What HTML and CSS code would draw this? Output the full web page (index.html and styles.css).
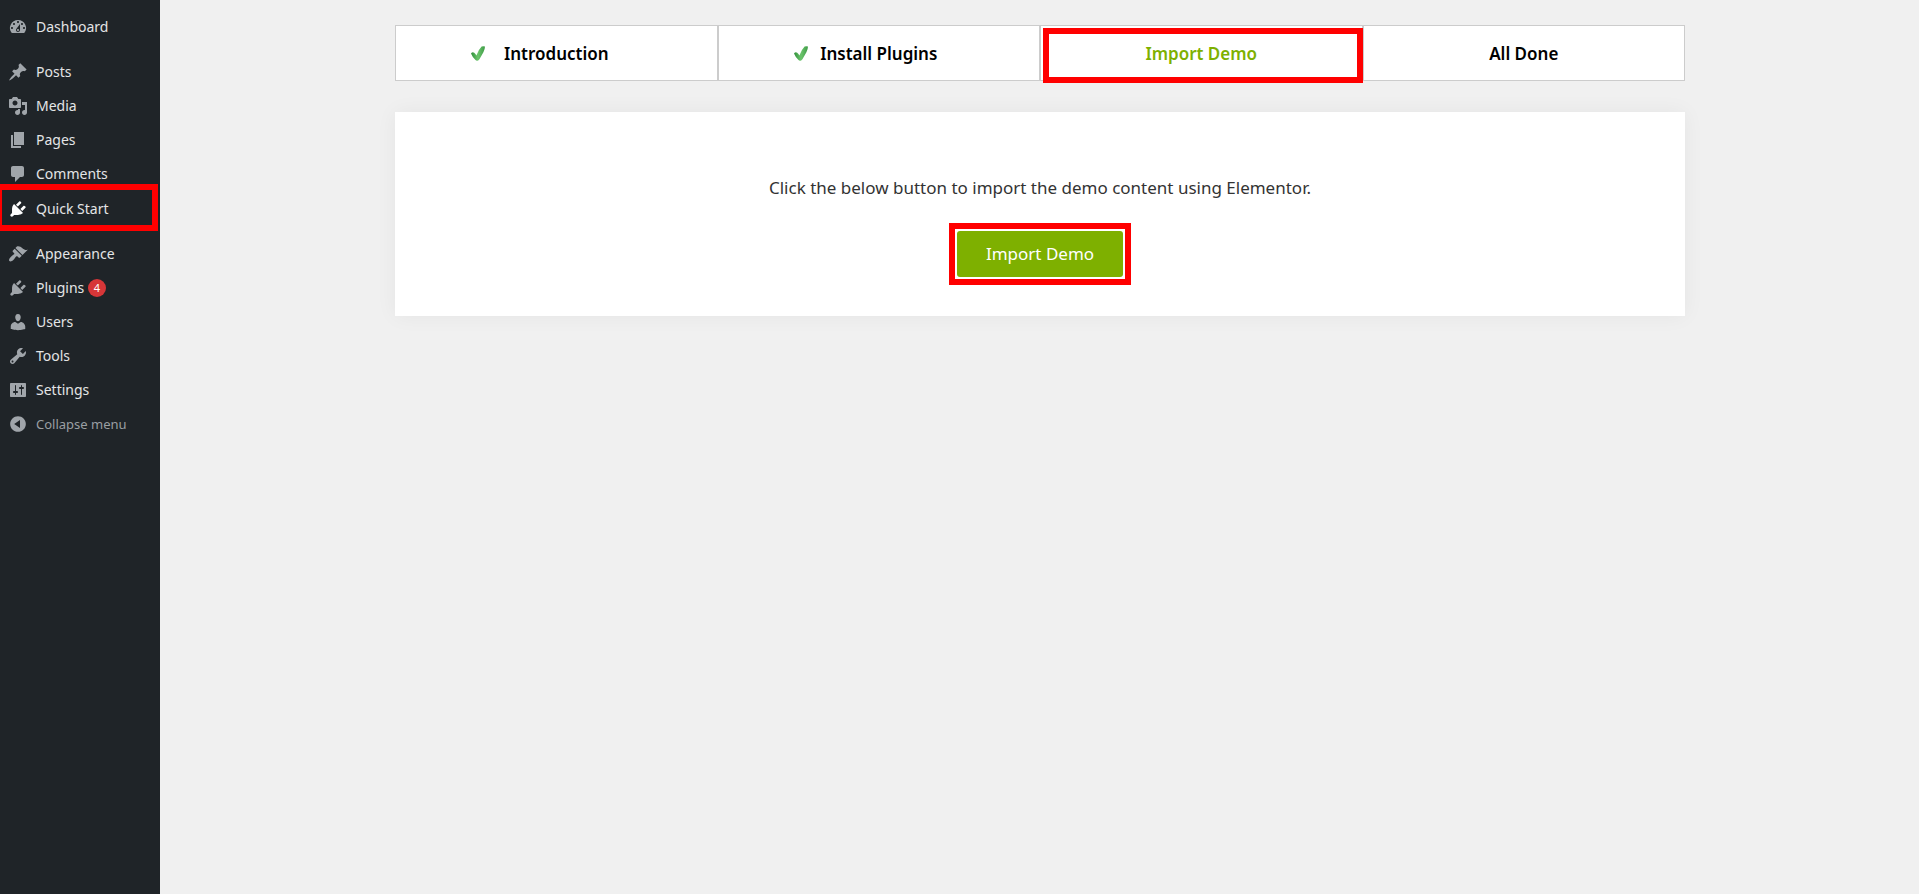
FILE: index.html
```html
<!DOCTYPE html>
<html lang="en">
<head>
<meta charset="utf-8">
<meta name="viewport" content="width=device-width, initial-scale=1">
<title>Quick Start</title>
<link rel="stylesheet" href="styles.css">
</head>
<body>
<div class="layout">
  <nav class="sidebar" aria-label="Main menu">
    <ul class="menu">
      <li class="menu-item"><a class="menu-link" href="#"><svg class="icon" viewBox="0 0 20 20" aria-hidden="true"><path d="M3.76 16h12.48A7.998 7.998 0 0 0 10 3a7.998 7.998 0 0 0-6.24 13zM10 4c.55 0 1 .45 1 1s-.45 1-1 1-1-.45-1-1 .45-1 1-1zM6 6c.55 0 1 .45 1 1s-.45 1-1 1-1-.45-1-1 .45-1 1-1zm8 0c.55 0 1 .45 1 1s-.45 1-1 1-1-.45-1-1 .45-1 1-1zm-5.37 5.55L12 7v6c0 1.1-.9 2-2 2s-2-.9-2-2c0-.57.24-1.08.63-1.45zM4 10c.55 0 1 .45 1 1s-.45 1-1 1-1-.45-1-1 .45-1 1-1zm12 0c.55 0 1 .45 1 1s-.45 1-1 1-1-.45-1-1 .45-1 1-1zm-5 3c0-.55-.45-1-1-1s-1 .45-1 1 .45 1 1 1 1-.45 1-1z"/></svg>Dashboard</a></li>
      <li class="separator" role="separator"></li>
      <li class="menu-item"><a class="menu-link" href="#"><svg class="icon" viewBox="0 0 20 20" aria-hidden="true"><path d="M10.44 3.02l1.82-1.82 6.36 6.35-1.83 1.82c-1.05-.68-2.48-.57-3.41.36l-.75.75c-.92.93-1.04 2.35-.35 3.41l-1.83 1.82-2.41-2.41-2.8 2.79c-.42.42-3.38 2.71-3.8 2.29s1.86-3.39 2.28-3.81l2.79-2.79L4.1 9.36l1.83-1.82c1.05.69 2.48.57 3.4-.36l.75-.75c.93-.92 1.05-2.35.36-3.41z"/></svg>Posts</a></li>
      <li class="menu-item"><a class="menu-link" href="#"><svg class="icon" viewBox="0 0 20 20" aria-hidden="true"><path d="M13 11V4c0-.55-.45-1-1-1h-1.67L9 1H5L3.67 3H2c-.55 0-1 .45-1 1v7c0 .55.45 1 1 1h10c.55 0 1-.45 1-1zM7 4.5c1.38 0 2.5 1.12 2.5 2.5S8.38 9.5 7 9.5 4.5 8.38 4.5 7 5.62 4.5 7 4.5zM14 6h5v10.5c0 1.38-1.12 2.5-2.5 2.5S14 17.88 14 16.5s1.12-2.5 2.5-2.5c.17 0 .34.02.5.05V9h-3V6zm-4 8.05V13h2v3.5c0 1.38-1.12 2.5-2.5 2.5S7 17.88 7 16.5 8.12 14 9.5 14c.17 0 .34.02.5.05z"/></svg>Media</a></li>
      <li class="menu-item"><a class="menu-link" href="#"><svg class="icon" viewBox="0 0 20 20" aria-hidden="true"><path d="M6 15V2h10v13H6zm-1 1h8v2H3V5h2v11z"/></svg>Pages</a></li>
      <li class="menu-item"><a class="menu-link" href="#"><svg class="icon" viewBox="0 0 20 20" aria-hidden="true"><path d="M5 2h9c1.1 0 2 .9 2 2v7c0 1.1-.9 2-2 2h-2l-5 5v-5H5c-1.1 0-2-.9-2-2V4c0-1.1.9-2 2-2z"/></svg>Comments</a></li>
      <li class="menu-item menu-item-current highlight"><a class="menu-link" href="#" aria-current="page"><svg class="icon" viewBox="0 0 20 20" aria-hidden="true"><path d="M13.11 4.36L9.87 7.6 8 5.73l3.24-3.24c.35-.34 1.05-.2 1.56.32.52.51.66 1.21.31 1.55zm-8 1.77l.91-1.12 9.01 9.01-1.19.84c-.71.71-2.63 1.16-3.82 1.16H6.14L4.9 17.26c-.59.59-1.54.59-2.12 0-.59-.58-.59-1.53 0-2.12l1.24-1.24v-3.88c0-1.13.4-3.19 1.09-3.89zm7.26 3.97l3.24-3.24c.34-.35 1.04-.21 1.55.31.52.51.66 1.21.31 1.55l-3.24 3.25z"/></svg>Quick Start</a></li>
      <li class="separator" role="separator"></li>
      <li class="menu-item"><a class="menu-link" href="#"><svg class="icon" viewBox="0 0 20 20" aria-hidden="true"><path d="M14.48 11.06L7.41 3.99l1.5-1.5c.5-.56 2.3-.47 3.51.32 1.21.8 1.43 1.28 2.91 2.1 1.18.64 2.45 1.26 4.45.85zm-.71.71L6.7 4.7 4.93 6.47c-.39.39-.39 1.02 0 1.41l1.06 1.06c.39.39.39 1.03 0 1.42-.6.6-1.43 1.11-2.21 1.69-.35.26-.7.53-1.01.84C1.43 14.23.4 16.08 1.4 17.07c.99 1 2.84-.03 4.18-1.36.31-.31.58-.66.85-1.02.57-.78 1.08-1.61 1.69-2.21.39-.39 1.02-.39 1.41 0l1.06 1.06c.39.39 1.02.39 1.41 0z"/></svg>Appearance</a></li>
      <li class="menu-item"><a class="menu-link" href="#"><svg class="icon" viewBox="0 0 20 20" aria-hidden="true"><path d="M13.11 4.36L9.87 7.6 8 5.73l3.24-3.24c.35-.34 1.05-.2 1.56.32.52.51.66 1.21.31 1.55zm-8 1.77l.91-1.12 9.01 9.01-1.19.84c-.71.71-2.63 1.16-3.82 1.16H6.14L4.9 17.26c-.59.59-1.54.59-2.12 0-.59-.58-.59-1.53 0-2.12l1.24-1.24v-3.88c0-1.13.4-3.19 1.09-3.89zm7.26 3.97l3.24-3.24c.34-.35 1.04-.21 1.55.31.52.51.66 1.21.31 1.55l-3.24 3.25z"/></svg><span>Plugins <span class="count">4</span></span></a></li>
      <li class="menu-item"><a class="menu-link" href="#"><svg class="icon" viewBox="0 0 20 20" aria-hidden="true"><path d="M10 9.25c-2.27 0-2.73-3.44-2.73-3.44C7 4.02 7.82 2 9.97 2c2.16 0 2.98 2.02 2.71 3.81 0 0-.41 3.44-2.68 3.44zm0 2.57L12.72 10c2.39 0 4.52 2.33 4.52 4.53v2.49s-3.65 1.13-7.24 1.13c-3.65 0-7.24-1.13-7.24-1.13v-2.49c0-2.25 1.94-4.48 4.47-4.48z"/></svg>Users</a></li>
      <li class="menu-item"><a class="menu-link" href="#"><svg class="icon" viewBox="0 0 20 20" aria-hidden="true"><path d="M16.68 9.77c-1.34 1.34-3.3 1.67-4.95.99l-5.41 6.52c-.99.99-2.59.99-3.58 0s-.99-2.59 0-3.57l6.52-5.42c-.68-1.65-.35-3.61.99-4.95 1.28-1.28 3.12-1.62 4.72-1.06l-2.89 2.89 2.82 2.82 2.86-2.87c.53 1.58.18 3.39-1.08 4.65zM3.81 16.21c.4.39 1.04.39 1.43 0 .4-.4.4-1.04 0-1.43-.39-.4-1.03-.4-1.43 0-.39.39-.39 1.03 0 1.43z"/></svg>Tools</a></li>
      <li class="menu-item"><a class="menu-link" href="#"><svg class="icon" viewBox="0 0 20 20" aria-hidden="true"><path d="M18 16V4c0-.55-.45-1-1-1H3c-.55 0-1 .45-1 1v12c0 .55.45 1 1 1h14c.55 0 1-.45 1-1zM8 11h1c.55 0 1 .45 1 1s-.45 1-1 1H8v1.5c0 .28-.22.5-.5.5s-.5-.22-.5-.5V13H6c-.55 0-1-.45-1-1s.45-1 1-1h1V5.5c0-.28.22-.5.5-.5s.5.22.5.5V11zm5-2h-1c-.55 0-1-.45-1-1s.45-1 1-1h1V5.5c0-.28.22-.5.5-.5s.5.22.5.5V7h1c.55 0 1 .45 1 1s-.45 1-1 1h-1v5.5c0 .28-.22.5-.5.5s-.5-.22-.5-.5V9z"/></svg>Settings</a></li>
      <li class="menu-item"><button class="menu-link collapse" type="button"><svg class="icon" viewBox="0 0 20 20" aria-hidden="true"><path d="M10 2.16c4.33 0 7.84 3.51 7.84 7.84s-3.51 7.84-7.84 7.84S2.16 14.33 2.16 10 5.71 2.16 10 2.16zm2 11.72V6.12L6.18 9.97z"/></svg>Collapse menu</button></li>
    </ul>
  </nav>
  <main class="content">
    <ol class="steps">
      <li class="step"><svg class="check" viewBox="0 0 14 15" aria-hidden="true"><defs><linearGradient id="tick" x1="0" y1="0" x2="1" y2="0"><stop offset="0" stop-color="#2f8f3a"/><stop offset=".5" stop-color="#6cc56c"/><stop offset="1" stop-color="#3f9b47"/></linearGradient></defs><path fill="url(#tick)" d="M0 7.500Q1.500 5.600 3.200 6.800Q4.600 8 5.400 9.600Q7.500 3.500 10.600.5Q12.500-.2 14 .6Q14 3 12.400 6.200L8.400 13.200Q6.300 16 4.500 14Q1.600 11.500 0 7.500z"/></svg><span class="step-label">Introduction</span></li>
      <li class="step"><svg class="check" viewBox="0 0 14 15" aria-hidden="true"><path fill="url(#tick)" d="M0 7.500Q1.500 5.600 3.200 6.800Q4.600 8 5.400 9.600Q7.500 3.500 10.600.5Q12.500-.2 14 .6Q14 3 12.400 6.200L8.400 13.200Q6.300 16 4.500 14Q1.600 11.500 0 7.500z"/></svg><span class="step-label">Install Plugins</span></li>
      <li class="step step-current highlight" aria-current="step"><span class="step-label">Import Demo</span></li>
      <li class="step"><span class="step-label">All Done</span></li>
    </ol>
    <section class="panel">
      <p class="lead">Click the below button to import the demo content using Elementor.</p>
      <div class="action highlight"><button class="button" type="button">Import Demo</button></div>
    </section>
  </main>
</div>
</body>
</html>
```
FILE: styles.css
```css
* {
  box-sizing: border-box;
}

body {
  margin: 0;
  background: #f0f0f0;
  color: #333;
  font-family: "Noto Sans", sans-serif;
}

.layout {
  display: flex;
  min-height: 100vh;
}

/* Sidebar */
.sidebar {
  flex: 0 0 160px;
  background: #1f2428;
}

.menu {
  margin: 0;
  padding: 10px 0 0;
  list-style: none;
}

.separator {
  height: 11px;
}

.menu-link {
  display: flex;
  align-items: center;
  gap: 8px;
  width: 100%;
  height: 34px;
  padding: 0 8px;
  border: 0;
  background: none;
  color: #e4e5e6;
  font: 14px/18px "Noto Sans", sans-serif;
  text-align: left;
  text-decoration: none;
}

.icon {
  flex: none;
  width: 20px;
  height: 20px;
  fill: #a0a5aa;
}

.menu-item-current .icon {
  fill: #fff;
}

.menu-item-current {
  padding-top: 1px;
}

.count {
  display: inline-block;
  width: 18px;
  height: 18px;
  border-radius: 50%;
  background: #d63638;
  color: #fff;
  font-size: 11px;
  text-align: center;
  vertical-align: top;
}

.collapse {
  color: #9a9fa3;
  font-size: 13px;
}

/* Red frames drawn over the highlighted controls */
.highlight {
  position: relative;
}

.highlight::after {
  position: absolute;
  inset: -7px 2px -5px -4px;
  border: 6px solid #f00;
  content: "";
  pointer-events: none;
}

/* Content */
.content {
  flex: 1;
  min-width: 0;
  padding: 25px 20px 25px 21px;
}

.steps,
.panel {
  max-width: 1290px;
  margin: 0 auto;
}

.steps {
  display: grid;
  grid-template-columns: repeat(4, 1fr);
  padding: 0;
  list-style: none;
}

.step {
  display: grid;
  grid-template-columns: 1fr auto 1fr;
  align-items: center;
  height: 56px;
  border: 1px solid #ccc;
  background: #fff;
  color: #000;
  font-size: 17px;
  font-weight: 600;
}

.step-label {
  grid-column: 2;
}

.check {
  width: 14px;
  height: 15px;
  margin-left: 75px;
}

.step-current {
  color: #7eb000;
}

.step-current::after {
  inset: 2px -1px -3px 2px;
}

.panel {
  display: flex;
  flex-direction: column;
  align-items: center;
  gap: 30px;
  margin-top: 31px;
  padding: 63px 20px 39px;
  background: #fff;
  box-shadow: 0 0 20px rgba(0, 0, 0, 0.05);
}

.lead {
  margin: 0;
  font-size: 17px;
  line-height: 26px;
}

.action::after {
  inset: -8px;
}

.button {
  display: block;
  height: 46px;
  padding: 0 29px;
  border: 0;
  border-radius: 3px;
  background: #7eb000;
  color: #fff;
  font: 17px/24px "Noto Sans", sans-serif;
}
```
